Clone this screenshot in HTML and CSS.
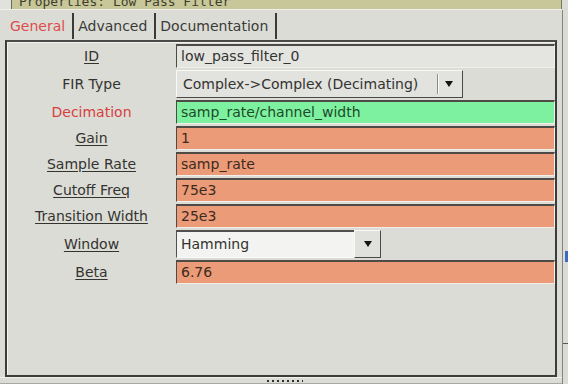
FILE: index.html
```html
<!DOCTYPE html>
<html lang="en">
  <head>
    <meta charset="UTF-8" />
    <title>Properties: Low Pass Filter</title>
    <link rel="stylesheet" href="styles.css">
  </head>
  <body>
    <div class="screen">
      <div class="main">
        <div class="titlebar">
          <div class="title-stub"></div>
          <div class="title"><span>Properties: Low Pass Filter</span></div>
        </div>
        <div class="tabs">
          <div class="tab active">General</div>
          <div class="tab">Advanced</div>
          <div class="tab">Documentation</div>
        </div>
        <div class="panel">
          <div class="params">
            <div class="label u">ID</div>
            <div class="entry plain">low_pass_filter_0</div>

            <div class="label">FIR Type</div>
            <div class="combo fir">
              <span class="combo-text">Complex-&gt;Complex (Decimating)</span>
              <span class="combo-sep"></span>
              <span class="arrow"></span>
            </div>

            <div class="label red">Decimation</div>
            <div class="entry green">samp_rate/channel_width</div>

            <div class="label u">Gain</div>
            <div class="entry orange">1</div>

            <div class="label u">Sample Rate</div>
            <div class="entry orange">samp_rate</div>

            <div class="label u">Cutoff Freq</div>
            <div class="entry orange">75e3</div>

            <div class="label u">Transition Width</div>
            <div class="entry orange">25e3</div>

            <div class="label u">Window</div>
            <div class="combo-entry">
              <span class="combo-field">Hamming</span>
              <span class="combo-btn"><span class="arrow"></span></span>
            </div>

            <div class="label u">Beta</div>
            <div class="entry orange">6.76</div>
          </div>
        </div>
        <div class="grip"><span class="dots"></span></div>
      </div>
      <div class="edge">
        <span class="edge-mark"></span>
        <span class="edge-tick"></span>
      </div>
    </div>
  </body>
</html>
```

FILE: styles.css
```css
* {
  box-sizing: border-box;
  margin: 0;
  padding: 0;
}
body {
  font-family: "DejaVu Sans", "Liberation Sans", sans-serif;
  font-size: 14px;
  color: #333330;
  background: #dcdcd6;
  overflow: hidden;
}
.screen {
  width: 568px;
  height: 384px;
  display: flex;
}
.main {
  width: 562px;
  display: flex;
  flex-direction: column;
}

/* title bar, cut at the top */
.titlebar {
  height: 10px;
  display: flex;
  border-bottom: 1px solid #efefea;
}
.title-stub {
  width: 12px;
  background: #e2e2dc;
  border-right: 1px solid #6c6c5c;
}
.title {
  flex: 1;
  background: #c7c799;
  border-right: 1px solid #7a7a5a;
  overflow: hidden;
  padding-left: 7px;
}
.title span {
  display: block;
  font-family: "DejaVu Sans Mono", "Liberation Mono", monospace;
  font-size: 13px;
  line-height: 13px;
  margin-top: -5px;
  color: #3e3e2c;
  white-space: nowrap;
}

/* tabs */
.tabs {
  height: 30px;
  display: flex;
  padding-left: 2px;
}
.tab {
  height: 26px;
  margin-top: 3px;
  line-height: 26px;
  padding: 0 7px 0 4px;
  border-right: 2px solid #3a3a38;
  color: #3a3a38;
}
.tab:first-child {
  padding-left: 8px;
}
.tab.active {
  color: #dc4c4c;
}

/* notebook page */
.panel {
  flex: 1;
  margin: 0 5px;
  border: 2px solid #3c3c3a;
  border-top-color: #4a4a48;
  box-shadow: inset 1px 1px 0 #f2f2ee;
  padding-top: 2px;
}
.params {
  display: grid;
  grid-template-columns: 169px 1fr;
  row-gap: 2px;
  align-items: center;
}
.label {
  text-align: center;
  color: #333330;
  white-space: nowrap;
}
.label.u {
  text-decoration: underline;
  text-underline-offset: 2px;
}
.label.red {
  color: #d63f3f;
}
.entry {
  height: 24px;
  line-height: 21px;
  padding-left: 4px;
  border-style: solid;
  border-width: 2px 1px 1px 1px;
  border-color: #4e4a46 #f2efea #f2efea #4e4a46;
  white-space: nowrap;
}
.entry.plain {
  background: #e4e4e0;
  color: #333330;
}
.entry.green {
  background: #7df19f;
  color: #1e4a2a;
}
.entry.orange {
  background: #eb9b77;
  color: #3c2a20;
}

/* FIR type combo */
.combo {
  width: 287px;
  height: 28px;
  display: flex;
  align-items: center;
  background: #e2e2de;
  border: 1px solid;
  border-color: #f8f8f6 #4a4a48 #4a4a48 #f8f8f6;
  padding-left: 6px;
}
.combo-text {
  flex: 1;
  white-space: nowrap;
}
.combo-sep {
  width: 2px;
  height: 20px;
  border-left: 1px solid #8a8a86;
  border-right: 1px solid #fafaf8;
  margin-right: 6px;
}
.combo .arrow {
  margin-right: 9px;
}
.arrow {
  width: 0;
  height: 0;
  border-top: 6px solid #141414;
  border-left: 4px solid transparent;
  border-right: 4px solid transparent;
}

/* window combo with entry */
.combo-entry {
  width: 205px;
  height: 28px;
  display: flex;
}
.combo-field {
  flex: 1;
  line-height: 25px;
  padding-left: 4px;
  background: #f3f3f1;
  border-style: solid;
  border-width: 2px 0 1px 1px;
  border-color: #505050 transparent #fafaf8 #505050;
}
.combo-btn {
  width: 27px;
  display: flex;
  align-items: center;
  justify-content: center;
  background: #e0e0dc;
  border: 1px solid;
  border-color: #f8f8f6 #4a4a48 #4a4a48 #f8f8f6;
}

/* bottom grip */
.grip {
  height: 7px;
  border-top: 1px solid #f0f0ec;
  border-bottom: 1px solid #a8a8a4;
  display: flex;
  justify-content: center;
}
.dots {
  width: 36px;
  height: 2px;
  margin-top: 2px;
  margin-left: 8px;
  background: repeating-linear-gradient(90deg, #2e2e2c 0 2px, transparent 2px 5px);
}

/* neighbouring window edge */
.edge {
  flex: 1;
  margin-top: 10px;
  border-left: 1px solid #84847f;
  display: flex;
  flex-direction: column;
  align-items: flex-end;
}
.edge-mark {
  width: 3px;
  height: 11px;
  margin-top: 241px;
  background: #3a6cc0;
}
.edge-tick {
  width: 5px;
  height: 1px;
  margin-top: 81px;
  background: #555;
}
```
